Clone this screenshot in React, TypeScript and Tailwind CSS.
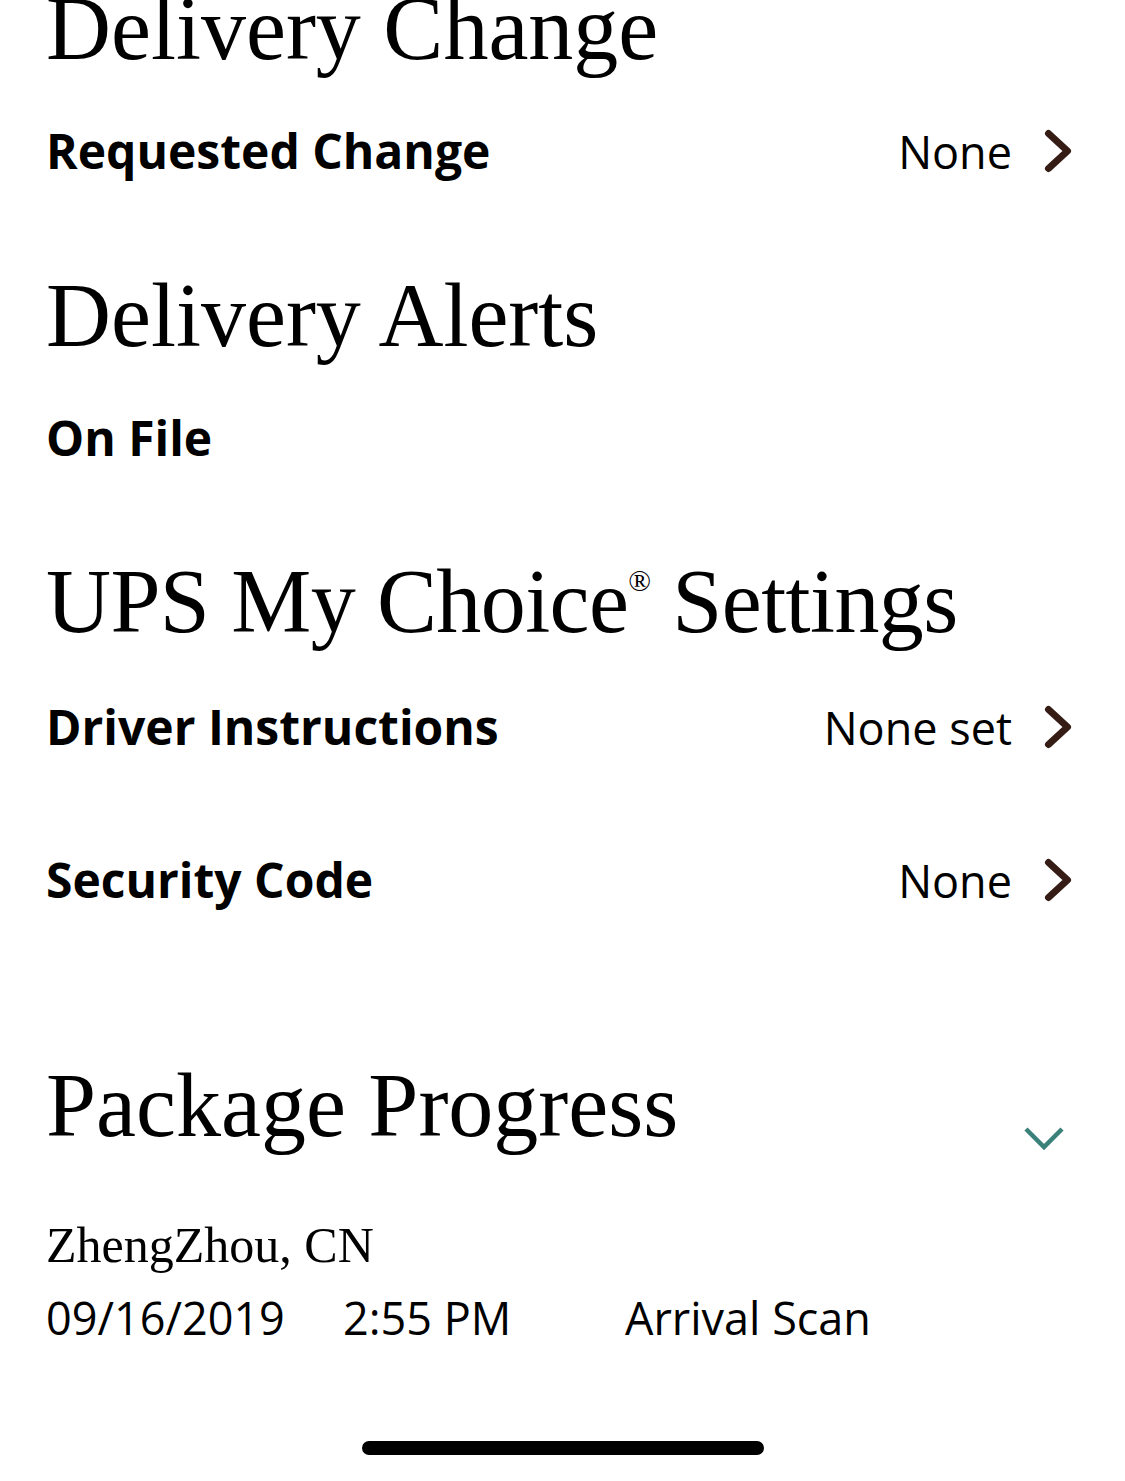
const serif = { fontFamily: '"Liberation Serif", "Times New Roman", serif' }
const sans = { fontFamily: '"Open Sans", "Noto Sans", sans-serif' }

function ChevronRight() {
  return (
    <svg width="28" height="44" viewBox="0 0 28 44" fill="none">
      <polyline points="4.5,4.5 23.5,22 4.5,39.5" stroke="#351c15" strokeWidth="7" strokeLinecap="round" strokeLinejoin="round" />
    </svg>
  )
}

function ChevronDown() {
  return (
    <svg width="42" height="27" viewBox="0 0 42 27" fill="none">
      <polyline points="3,3 21,21 39,3" stroke="#3a8179" strokeWidth="4.5" />
    </svg>
  )
}

function Heading({ children, className = '' }: { children: React.ReactNode; className?: string }) {
  return (
    <h2 style={serif} className={`text-[90px] leading-none text-black whitespace-nowrap ${className}`}>
      {children}
    </h2>
  )
}

function Row({ label, value, className = '' }: { label: string; value: string; className?: string }) {
  return (
    <div className={`flex items-center justify-between ${className}`}>
      <span style={sans} className="text-[48px] leading-none font-bold text-black">{label}</span>
      <div className="flex items-center gap-8">
        <span style={sans} className="text-[45px] leading-none text-black">{value}</span>
        <ChevronRight />
      </div>
    </div>
  )
}

export default function App() {
  return (
    <div className="w-[1125px] h-[1481px] bg-white overflow-hidden">
      <div className="pl-[46px] pr-[53px]">
        <Heading className="mt-[-16px]">Delivery Change</Heading>
        <Row label="Requested Change" value="None" className="mt-[53px]" />

        <Heading className="mt-[96px]">Delivery Alerts</Heading>
        <div style={sans} className="mt-[53px] text-[48px] leading-none font-bold text-black">On File</div>

        <Heading className="mt-[95px] tracking-[-0.6px]">
          UPS My Choice<sup className="text-[30px] relative top-[-10px] align-super">®</sup> Settings
        </Heading>
        <Row label="Driver Instructions" value="None set" className="mt-[56px]" />
        <Row label="Security Code" value="None" className="mt-[105px]" />

        <div className="mt-[157px] flex items-end justify-between pr-[7px]">
          <Heading>Package Progress</Heading>
          <div className="mb-[-2px]">
            <ChevronDown />
          </div>
        </div>

        <div style={serif} className="mt-[69px] text-[50px] leading-none text-black">ZhengZhou, CN</div>
        <div style={sans} className="mt-[25px] flex text-[45px] leading-none text-black">
          <span className="w-[297px]">09/16/2019</span>
          <span className="w-[282px]">2:55 PM</span>
          <span>Arrival Scan</span>
        </div>
      </div>

      <div className="mt-[101px] flex justify-center">
        <div className="w-[402px] h-[14px] rounded-full bg-black" />
      </div>
    </div>
  )
}
